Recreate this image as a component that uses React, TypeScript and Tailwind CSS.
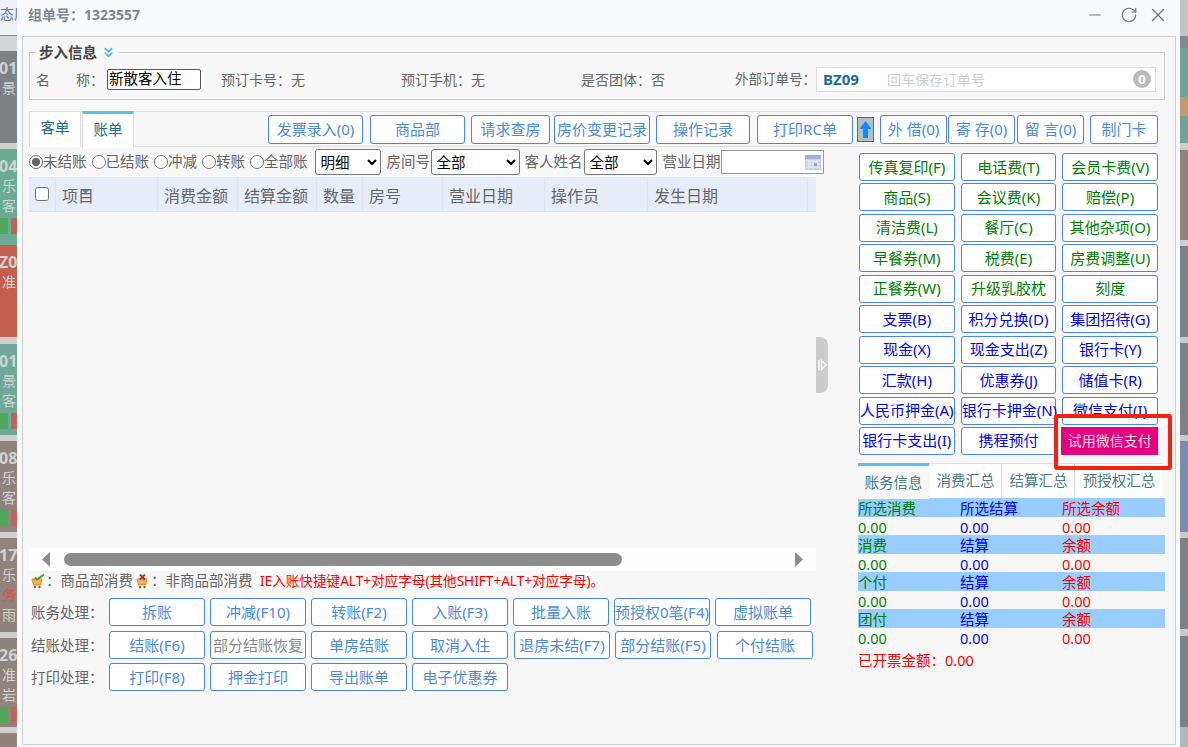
import { ChevronsDown, Minus, RotateCw, X } from "lucide-react";

const font = { fontFamily: '"Noto Sans", "Noto Sans CJK SC", sans-serif' };

type Strip = { h: string; bg: string; text?: string; sub?: string[]; badges?: boolean };

const leftStrip: Strip[] = [
  { h: "h-[35px]", bg: "bg-[#eef0f3]" },
  { h: "h-[1px]", bg: "bg-[#6a8bc8]" },
  { h: "h-[15px]", bg: "bg-[#d4d5d6]" },
  { h: "h-[92px]", bg: "bg-[#7d8183]", text: "01", sub: ["景"] },
  { h: "h-[6px]", bg: "bg-[#cfcfcf]" },
  { h: "h-[96px]", bg: "bg-[#6bab94]", text: "04", sub: ["乐", "客"], badges: true },
  { h: "h-[92px]", bg: "bg-[#c25f4e]", text: "Z0", sub: ["准"] },
  { h: "h-[7px]", bg: "bg-[#cfcfcf]" },
  { h: "h-[91px]", bg: "bg-[#6fa896]", text: "01", sub: ["景", "客"], badges: true },
  { h: "h-[6px]", bg: "bg-[#cfcfcf]" },
  { h: "h-[91px]", bg: "bg-[#8f837b]", text: "08", sub: ["乐", "客"], badges: true },
  { h: "h-[6px]", bg: "bg-[#cfcfcf]" },
  { h: "h-[94px]", bg: "bg-[#8f837b]", text: "17", sub: ["乐", "务", "雨"] },
  { h: "h-[6px]", bg: "bg-[#cfcfcf]" },
  { h: "h-[89px]", bg: "bg-[#8f837b]", text: "26", sub: ["准", "岩"], badges: true },
  { h: "h-[6px]", bg: "bg-[#cfcfcf]" },
  { h: "h-[14px]", bg: "bg-[#8f837b]" },
];

const rightStrip: Strip[] = [
  { h: "h-[36px]", bg: "bg-[#c4c4c4]" },
  { h: "h-[12px]", bg: "bg-[#85898b]" },
  { h: "h-[49px]", bg: "bg-[#6fa594]" },
  { h: "h-[19px]", bg: "bg-[#c49a6c]" },
  { h: "h-[27px]", bg: "bg-[#6fa594]" },
  { h: "h-[7px]", bg: "bg-[#cfcfcf]" },
  { h: "h-[90px]", bg: "bg-[#8f837b]" },
  { h: "h-[6px]", bg: "bg-[#cfcfcf]" },
  { h: "h-[91px]", bg: "bg-[#7d8183]" },
  { h: "h-[6px]", bg: "bg-[#c8cacb]" },
  { h: "h-[92px]", bg: "bg-[#7d8183]" },
  { h: "h-[6px]", bg: "bg-[#c8cacb]" },
  { h: "h-[91px]", bg: "bg-[#7a8cae]" },
  { h: "h-[6px]", bg: "bg-[#c8cacb]" },
  { h: "h-[91px]", bg: "bg-[#7d8183]" },
  { h: "h-[7px]", bg: "bg-[#c8cacb]" },
  { h: "h-[91px]", bg: "bg-[#7d8183]" },
  { h: "h-[20px]", bg: "bg-[#b5b8bb]" },
];

const greenRows = [
  "传真复印(F)", "电话费(T)", "会员卡费(V)",
  "商品(S)", "会议费(K)", "赔偿(P)",
  "清洁费(L)", "餐厅(C)", "其他杂项(O)",
  "早餐券(M)", "税费(E)", "房费调整(U)",
  "正餐券(W)", "升级乳胶枕", "刻度",
];

const blueRows = [
  "支票(B)", "积分兑换(D)", "集团招待(G)",
  "现金(X)", "现金支出(Z)", "银行卡(Y)",
  "汇款(H)", "优惠券(J)", "储值卡(R)",
  "人民币押金(A)", "银行卡押金(N)", "微信支付(I)",
  "银行卡支出(I)", "携程预付",
];

const columns = [
  { label: "项目", w: "w-[102px]" },
  { label: "消费金额", w: "w-[80px]" },
  { label: "结算金额", w: "w-[79px]" },
  { label: "数量", w: "w-[46px]" },
  { label: "房号", w: "w-[80px]" },
  { label: "营业日期", w: "w-[102px]" },
  { label: "操作员", w: "w-[103px]" },
  { label: "发生日期", w: "w-[160px]" },
];

const summary = [
  ["所选消费", "所选结算", "所选余额"],
  ["消费", "结算", "余额"],
  ["个付", "结算", "余额"],
  ["团付", "结算", "余额"],
];

const radios = [
  { label: "未结账", checked: true },
  { label: "已结账" },
  { label: "冲减" },
  { label: "转账" },
  { label: "全部账" },
];

function Btn({ children, className = "" }: { children: React.ReactNode; className?: string }) {
  return (
    <button className={`h-[28px] shrink-0 whitespace-nowrap rounded-[3px] border border-[#4a86e0] bg-white text-center text-[15px] leading-none text-[#4a8ae0] ${className}`}>
      {children}
    </button>
  );
}

function StripColumn({ items, width }: { items: Strip[]; width: string }) {
  return (
    <div className={`${width} shrink-0 overflow-hidden`}>
      {items.map((s, i) => (
        <div key={i} className={`${s.h} ${s.bg} overflow-hidden whitespace-nowrap text-[14px] leading-[20px] text-[#cfd3d3]`}>
          {s.text && <div className="-ml-[1px] mt-[7px] text-[16px] font-bold">{s.text}</div>}
          {s.sub?.map((t) => (
            <div key={t} className={t === "务" ? "ml-[2px] text-[#d9534f]" : "ml-[2px]"}>{t}</div>
          ))}
          {s.badges && (
            <div className="mt-[2px] flex h-[16px] gap-x-[3px]">
              <span className="w-[8px] bg-[#4ea65a]" />
              <span className="w-[6px] bg-[#c9605a]" />
            </div>
          )}
        </div>
      ))}
    </div>
  );
}

function Cart({ bad }: { bad?: boolean }) {
  return (
    <svg width="15" height="15" viewBox="0 0 15 15" className="shrink-0">
      <path d="M1 5h10l-1.5 6h-7z" fill="#f4b64a" stroke="#c9781c" strokeWidth="0.8" />
      <circle cx="4" cy="13" r="1.2" fill="#666" />
      <circle cx="8.5" cy="13" r="1.2" fill="#666" />
      {bad ? (
        <path d="M4 0.5l5 5M9 0.5l-5 5" stroke="#a93226" strokeWidth="1.8" />
      ) : (
        <path d="M4 3.5l2 2 7-5" stroke="#3f9e2f" strokeWidth="1.8" fill="none" />
      )}
    </svg>
  );
}

export default function App() {
  return (
    <div className="relative flex h-[747px] w-[1188px] overflow-hidden bg-[#cfcfcf]" style={font}>
      <div className="relative">
        <StripColumn items={leftStrip} width="w-[17px]" />
        <span className="absolute left-0 top-[3px] w-[17px] overflow-hidden whitespace-nowrap text-[14px] text-[#5a78c0]">态屏</span>
      </div>

      <div className="flex w-[1163px] shrink-0 flex-col bg-[#f8f9fa]">
        {/* title bar */}
        <div className="flex h-[36px] shrink-0 items-center justify-between pb-[7px] pl-[11px] pr-[11px]">
          <span className="text-[14px] font-bold text-[#7b8794]">组单号：1323557</span>
          <div className="flex items-center text-[#777]">
            <Minus size={18} strokeWidth={1.5} />
            <RotateCw size={18} strokeWidth={1.6} className="ml-[16px]" />
            <X size={22} strokeWidth={1.5} className="ml-[9px]" />
          </div>
        </div>

        <div className="ml-[5px] h-[709px] w-[1154px] border border-[#ccc] bg-[#f7f7f7] pl-[6px]">
          {/* guest info */}
          <fieldset className="mt-[5px] h-[58px] w-[1136px] border border-[#ccc]">
            <legend className="ml-[6px] flex h-[20px] items-center whitespace-nowrap px-[3px] text-[14.5px] font-bold leading-none text-[#444]">
              步入信息
              <ChevronsDown size={15} strokeWidth={3} className="ml-[4px] text-[#5bb5ee]" />
            </legend>
            <div className="flex h-[36px] items-center whitespace-nowrap pb-[2px] pl-[6px] text-[14px] text-[#666]">
              <span className="w-[40px]">名</span>
              <span className="w-[31px]">称：</span>
              <input
                readOnly
                value="新散客入住"
                className="h-[21px] w-[94px] rounded-[2px] border border-[#555] bg-white pl-[1px] text-[14.5px] text-black"
              />
              <span className="ml-[20px] w-[180px]">预订卡号：无</span>
              <span className="w-[180px]">预订手机：无</span>
              <span className="w-[154px]">是否团体：否</span>
              <span className="w-[81px] text-[13.5px]">外部订单号：</span>
              <div className="flex h-[25px] w-[340px] items-center border border-[#ddd] bg-white pl-[6px]">
                <span className="w-[64px] text-[15px] font-bold text-[#1a6aa5]">BZ09</span>
                <span className="text-[14px] text-[#ccc]">回车保存订单号</span>
                <span className="ml-auto mr-[4px] flex h-[18px] w-[18px] items-center justify-center rounded-full bg-[#bbb] text-[13px] font-bold leading-none text-white">0</span>
              </div>
            </div>
          </fieldset>

          {/* tabs and actions */}
          <div className="mt-[11px] flex h-[36px] w-[1129px] items-center border-y border-[#ddd]">
            <div className="flex h-[35px] w-[52px] items-center justify-center border-x border-[#ddd] bg-white pb-[3px] text-[14.5px] text-[#1b6a8a]">客单</div>
            <div className="-mt-[1px] mb-[-2px] ml-[1px] flex h-[37px] w-[52px] items-center justify-center border-x border-t-[3px] border-[#ddd] border-t-[#5bc0eb] bg-white pb-[2px] text-[14.5px] text-[#1b6a8a]">账单</div>
            <Btn className="ml-[134px] h-[29px] w-[95px]">发票录入(0)</Btn>
            <Btn className="ml-[7px] h-[29px] w-[95px]">商品部</Btn>
            <Btn className="ml-[6px] h-[29px] w-[79px]">请求查房</Btn>
            <Btn className="ml-[4px] h-[29px] w-[96px]">房价变更记录</Btn>
            <Btn className="ml-[6px] h-[29px] w-[94px]">操作记录</Btn>
            <Btn className="ml-[7px] h-[29px] w-[96px]">打印RC单</Btn>
            <div className="ml-[4px] flex h-[25px] w-[17px] items-center justify-center border border-[#666] bg-[#b4c0c8]">
              <svg width="13" height="19" viewBox="0 0 13 19">
                <path d="M6.5 1L12.5 9H9V18H4V9H0.5z" fill="#0a8cff" />
              </svg>
            </div>
            <Btn className="ml-[6px] h-[29px] w-[67px]">外 借(0)</Btn>
            <Btn className="ml-[1px] h-[29px] w-[67px]">寄 存(0)</Btn>
            <Btn className="ml-[2px] h-[29px] w-[67px]">留 言(0)</Btn>
            <Btn className="ml-[6px] h-[29px] w-[68px]">制门卡</Btn>
          </div>

          <div className="relative flex">
            {/* left column */}
            <div className="relative w-[787px] shrink-0">
              <div className="flex h-[30px] items-center whitespace-nowrap text-[14.5px] text-[#666]">
                {radios.map((r) => (
                  <label key={r.label} className="mr-[5px] flex items-center">
                    <input type="radio" name="state" defaultChecked={r.checked} className="m-0 h-[14px] w-[14px] shrink-0 accent-[#666]" />
                    {r.label}
                  </label>
                ))}
                <select className="ml-[2px] h-[26px] w-[66px] shrink-0 rounded-[3px] border border-[#767676] bg-white pl-[1px] text-[14.5px] text-black">
                  <option>明细</option>
                </select>
                <span className="ml-[6px] w-[44px] shrink-0">房间号</span>
                <select className="h-[26px] w-[89px] shrink-0 rounded-[3px] border border-[#767676] bg-white pl-[1px] text-[14.5px] text-black">
                  <option>全部</option>
                </select>
                <span className="ml-[5px] w-[59px] shrink-0">客人姓名</span>
                <select className="h-[26px] w-[73px] shrink-0 rounded-[3px] border border-[#767676] bg-white pl-[1px] text-[14.5px] text-black">
                  <option>全部</option>
                </select>
                <span className="ml-[6px] w-[58px] shrink-0">营业日期</span>
                <div className="flex h-[24px] w-[103px] shrink-0 items-center justify-end border border-[#999] bg-white pr-[2px]">
                  <svg width="16" height="15" viewBox="0 0 16 15">
                    <rect width="16" height="15" fill="#c4d0e4" />
                    <rect x="0" y="0" width="16" height="4" fill="#9fb2d0" />
                    <path d="M1 6h14M1 9h14M1 12h14M4 5v9M8 5v9M12 5v9" stroke="#eef2f8" strokeWidth="0.8" />
                    <rect x="9" y="8" width="3" height="3" fill="#e08a80" />
                  </svg>
                </div>
              </div>

              {/* grid header */}
              <div className="flex h-[35px] items-center border-y border-[#dde5f0] bg-[#e6edf8] text-[16px] leading-none text-[#666]">
                <div className="flex h-full w-[27px] items-center justify-center border-r border-[#dde5f0] pb-[2px]">
                  <input type="checkbox" className="m-0 h-[14px] w-[14px]" />
                </div>
                {columns.map((c) => (
                  <div key={c.label} className={`relative flex h-full ${c.w} items-center border-r border-[#dde5f0] pl-[6px] pt-[3px]`}>
                    {c.label}
                    {c.label === "项目" && (
                      <svg width="7" height="4" viewBox="0 0 7 4" className="absolute left-[26px] top-[12px]">
                        <path d="M0 0h7L3.5 4z" fill="#5b84c4" />
                      </svg>
                    )}
                  </div>
                ))}
              </div>

              <div className="h-[336px]" />

              {/* horizontal scrollbar */}
              <div className="flex h-[23px] items-center bg-[#fdfdfd] pl-[13px]">
                <svg width="8" height="15" viewBox="0 0 8 15"><path d="M8 0v15L0 7.5z" fill="#8c8c8c" /></svg>
                <div className="ml-[14px] h-[13px] w-[558px] rounded-full bg-[#8c8c8c]" />
                <svg width="8" height="15" viewBox="0 0 8 15" className="ml-[173px]"><path d="M0 0v15l8-7.5z" fill="#8c8c8c" /></svg>
              </div>

              <div className="flex h-[20px] items-center pl-[2px] text-[14.5px] text-[#666]">
                <Cart />
                <span className="w-[90px] whitespace-nowrap">：商品部消费</span>
                <Cart bad />
                <span className="w-[109px] whitespace-nowrap">：非商品部消费</span>
                <span className="whitespace-nowrap text-[13.6px] text-[#ff0000]">IE入账快捷键ALT+对应字母(其他SHIFT+ALT+对应字母)。</span>
              </div>

              {/* bill actions */}
              <div className="mt-[7px] flex h-[28px] items-center gap-x-[5px] pl-[2px] text-[14.5px] text-[#666]">
                <span className="w-[73px] whitespace-nowrap pt-[1px]">账务处理：</span>
                <Btn className="w-[96px]">拆账</Btn>
                <Btn className="w-[96px]">冲减(F10)</Btn>
                <Btn className="w-[96px]">转账(F2)</Btn>
                <Btn className="w-[96px]">入账(F3)</Btn>
                <Btn className="w-[96px]">批量入账</Btn>
                <Btn className="w-[96px]">预授权0笔(F4)</Btn>
                <Btn className="w-[96px]">虚拟账单</Btn>
              </div>
              <div className="mt-[5px] flex h-[28px] items-center gap-x-[5px] pl-[2px] text-[14.5px] text-[#666]">
                <span className="w-[73px] whitespace-nowrap pt-[1px]">结账处理：</span>
                <Btn className="w-[96px]">结账(F6)</Btn>
                <Btn className="w-[96px] !text-[#888]">部分结账恢复</Btn>
                <Btn className="w-[96px]">单房结账</Btn>
                <Btn className="w-[96px]">取消入住</Btn>
                <Btn className="ml-[1px] w-[96px]">退房未结(F7)</Btn>
                <Btn className="w-[96px]">部分结账(F5)</Btn>
                <Btn className="ml-[1px] w-[96px]">个付结账</Btn>
              </div>
              <div className="mt-[4px] flex h-[28px] items-center gap-x-[5px] pl-[2px] text-[14.5px] text-[#666]">
                <span className="w-[73px] whitespace-nowrap pt-[1px]">打印处理：</span>
                <Btn className="w-[96px]">打印(F8)</Btn>
                <Btn className="w-[96px]">押金打印</Btn>
                <Btn className="w-[96px]">导出账单</Btn>
                <Btn className="w-[96px]">电子优惠券</Btn>
              </div>

              {/* collapse handle */}
              <div className="absolute -right-[12px] top-[190px] flex h-[56px] w-[12px] items-center justify-center rounded-r-[8px] bg-[#cccccc]">
                <svg width="9" height="12" viewBox="0 0 9 12" fill="none" stroke="#fff" strokeWidth="1.4">
                  <path d="M1 1v10M3.5 1.5L8 6l-4.5 4.5z" />
                </svg>
              </div>
            </div>

            {/* right column */}
            <div className="relative ml-[42px] w-[307px] shrink-0">
              <div className="ml-[1px] mt-[6px] grid w-[299px] grid-cols-3 gap-x-[6px] gap-y-[2.44px]">
                {greenRows.map((t) => (
                  <Btn key={t} className="w-full !px-0 !text-[#008000]">{t}</Btn>
                ))}
                {blueRows.map((t) => (
                  <Btn key={t} className="w-full !px-0 !text-[#0000ff]">{t}</Btn>
                ))}
                <button className="-ml-[1px] h-[28px] whitespace-nowrap bg-[#e6007e] text-[14px] leading-none text-[#f6dce8]">试用微信支付</button>
              </div>

              <div className="mt-[8px] flex h-[35px] w-[304px] whitespace-nowrap border-t border-[#ddd] text-[14.5px] text-[#4a7a8a]">
                <div className="-mt-[1px] flex h-[36px] w-[71px] items-center justify-center border-t-[3px] border-[#5bc0eb] bg-[#f7f7f7]">账务信息</div>
                <div className="ml-[1px] flex w-[72px] items-center justify-center border-r border-[#d8dfe2] bg-white">消费汇总</div>
                <div className="ml-[1px] flex w-[72px] items-center justify-center border-r border-[#d8dfe2] bg-white">结算汇总</div>
                <div className="ml-[1px] flex w-[86px] items-center justify-center bg-white">预授权汇总</div>
              </div>

              <div className="w-[307px] text-[14.5px]">
                {summary.map((row, i) => (
                  <div key={i}>
                    <div className="grid h-[19px] grid-cols-[102px_102px_103px] items-center whitespace-nowrap bg-[#99ccff]">
                      <span className="text-[#008000]">{row[0]}</span>
                      <span className="text-[#0000ff]">{row[1]}</span>
                      <span className="text-[#ff0000]">{row[2]}</span>
                    </div>
                    <div className="grid h-[18px] grid-cols-[102px_102px_103px] items-center">
                      <span className="text-[#008000]">0.00</span>
                      <span className="text-[#0000ff]">0.00</span>
                      <span className="text-[#ff0000]">0.00</span>
                    </div>
                  </div>
                ))}
                <div className="mt-[4px] text-[#ff0000]">已开票金额：0.00</div>
              </div>

              {/* red highlight */}
              <div className="pointer-events-none absolute left-[196px] top-[267px] h-[56px] w-[118px] rounded-[3px] border-[4px] border-[#f5200f]" />
            </div>
          </div>
        </div>
      </div>

      <StripColumn items={rightStrip} width="w-[8px]" />
    </div>
  );
}
